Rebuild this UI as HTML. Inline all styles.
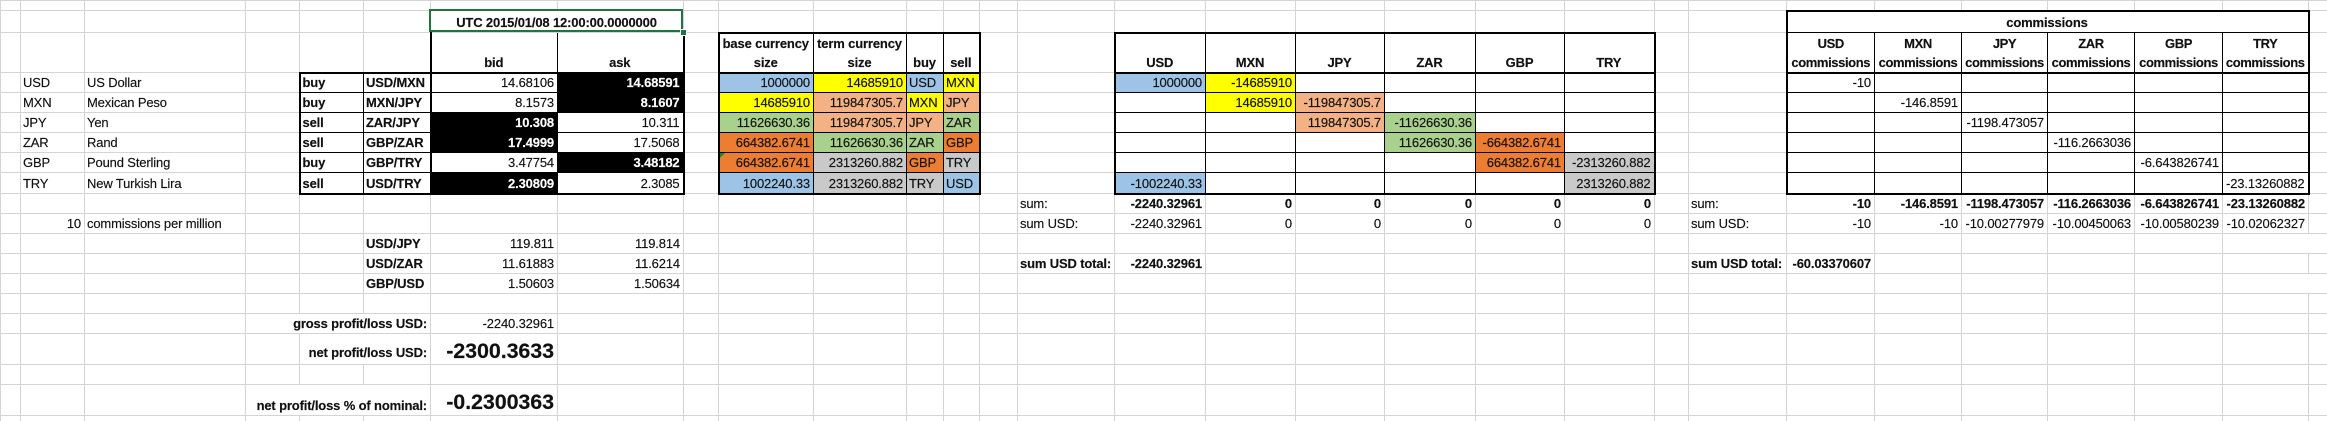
<!DOCTYPE html>
<html><head><meta charset="utf-8"><title>Triangular arbitrage sheet</title>
<style>
html,body{margin:0;padding:0;background:#fff;width:2327px;height:421px;overflow:hidden}
body{position:relative;font-family:"Liberation Sans",Arial,sans-serif;font-size:13px;color:#111;letter-spacing:-.15px;-webkit-text-stroke:.15px currentColor}
table{border-collapse:collapse;table-layout:fixed;width:2327px;position:absolute;left:0;top:0}
td{border:1px solid #d4d4d4;padding:0 3px 0 2px;vertical-align:bottom;white-space:nowrap;line-height:18px;overflow:visible;box-sizing:border-box}
.r{text-align:right}.c{text-align:center}.b{font-weight:bold}
.h{line-height:19px}.m{letter-spacing:-.4px;padding:0}
.k{border:1px solid #000}.L{border-left:2px solid #000}.R{border-right:2px solid #000}.T{border-top:2px solid #000}.B{border-bottom:2px solid #000}
.x{background:#000;color:#fff;font-weight:bold}
.bl{background:#9dc3e6}.ye{background:#ff0}.pe{background:#f4b183}.gr{background:#a9d18e}.or{background:#ed7d31}.gy{background:#c9c9c9}
.big{font-size:21.5px;font-weight:bold;letter-spacing:-.1px;line-height:26px;padding-bottom:0}
.n{padding-bottom:2px}
.sel{position:absolute;left:429px;top:9px;width:250px;height:19px;border:2px solid #217346;box-sizing:content-box}
.han{position:absolute;left:680px;top:29px;width:5px;height:5px;background:#217346;border:1px solid #fff}
.tri{position:absolute;left:720px;top:153px;width:0;height:0;border-top:5px solid #1e8a1e;border-right:5px solid transparent}
</style></head><body>
<table>
<colgroup><col style="width:20px"><col style="width:64px"><col style="width:161px"><col style="width:54px"><col style="width:64px"><col style="width:67px"><col style="width:127px"><col style="width:126px"><col style="width:35px"><col style="width:95px"><col style="width:93px"><col style="width:37px"><col style="width:36px"><col style="width:38px"><col style="width:97px"><col style="width:91px"><col style="width:90px"><col style="width:89px"><col style="width:91px"><col style="width:89px"><col style="width:90px"><col style="width:34px"><col style="width:98px"><col style="width:88px"><col style="width:87px"><col style="width:86px"><col style="width:87px"><col style="width:88px"><col style="width:86px"><col style="width:19px"></colgroup>
<tr style="height:10px"><td><td><td><td><td> <td><td><td><td><td> <td><td><td><td><td> <td><td><td><td><td> <td><td><td><td><td> <td><td><td><td><td></tr>
<tr style="height:22px"><td><td><td><td><td> <td>
<td colspan="2" class="c b">UTC 2015/01/08 12:00:00.0000000</td>
<td><td> <td><td><td><td><td> <td><td><td><td><td> <td><td><td>
<td colspan="6" class="k L R T c b">commissions</td><td></tr>
<tr style="height:40px"><td><td><td><td><td> <td>
<td class="k L B c b">bid</td><td class="k R B c b">ask</td><td>
<td class="k L T B c b h">base currency<br>size</td><td class="k T B c b h">term currency<br>size</td><td class="k T B c b">buy</td><td class="k R T B c b">sell</td><td><td>
<td class="k L T B c b">USD</td><td class="k T B c b">MXN</td><td class="k T B c b">JPY</td><td class="k T B c b">ZAR</td><td class="k T B c b">GBP</td><td class="k R T B c b">TRY</td><td><td>
<td class="k L B c b h m">USD<br>commissions</td><td class="k B c b h m">MXN<br>commissions</td><td class="k B c b h m">JPY<br>commissions</td><td class="k B c b h m">ZAR<br>commissions</td><td class="k B c b h m">GBP<br>commissions</td><td class="k R B c b h m">TRY<br>commissions</td><td></tr>
<tr style="height:20px"><td><td>USD</td><td>US Dollar</td><td>
<td class="k L T b">buy</td><td class="k T R b">USD/MXN</td><td class="k r">14.68106</td><td class="k R r x">14.68591</td><td>
<td class="k L r bl">1000000</td><td class="k r ye">14685910</td><td class="k bl">USD</td><td class="k R ye">MXN</td><td><td>
<td class="k L r bl">1000000</td><td class="k r ye">-14685910</td><td class="k"></td><td class="k"></td><td class="k"></td><td class="k R"></td><td><td>
<td class="k L r">-10</td><td class="k"></td><td class="k"></td><td class="k"></td><td class="k"></td><td class="k R"></td><td></tr>
<tr style="height:20px"><td><td>MXN</td><td>Mexican Peso</td><td>
<td class="k L b">buy</td><td class="k R b">MXN/JPY</td><td class="k r">8.1573</td><td class="k R r x">8.1607</td><td>
<td class="k L r ye">14685910</td><td class="k r pe">119847305.7</td><td class="k ye">MXN</td><td class="k R pe">JPY</td><td><td>
<td class="k L"></td><td class="k r ye">14685910</td><td class="k r pe">-119847305.7</td><td class="k"></td><td class="k"></td><td class="k R"></td><td><td>
<td class="k L"></td><td class="k r">-146.8591</td><td class="k"></td><td class="k"></td><td class="k"></td><td class="k R"></td><td></tr>
<tr style="height:20px"><td><td>JPY</td><td>Yen</td><td>
<td class="k L b">sell</td><td class="k R b">ZAR/JPY</td><td class="k r x">10.308</td><td class="k R r">10.311</td><td>
<td class="k L r gr">11626630.36</td><td class="k r pe">119847305.7</td><td class="k pe">JPY</td><td class="k R gr">ZAR</td><td><td>
<td class="k L"></td><td class="k"></td><td class="k r pe">119847305.7</td><td class="k r gr">-11626630.36</td><td class="k"></td><td class="k R"></td><td><td>
<td class="k L"></td><td class="k"></td><td class="k r">-1198.473057</td><td class="k"></td><td class="k"></td><td class="k R"></td><td></tr>
<tr style="height:20px"><td><td>ZAR</td><td>Rand</td><td>
<td class="k L b">sell</td><td class="k R b">GBP/ZAR</td><td class="k r x">17.4999</td><td class="k R r">17.5068</td><td>
<td class="k L r or">664382.6741</td><td class="k r gr">11626630.36</td><td class="k gr">ZAR</td><td class="k R or">GBP</td><td><td>
<td class="k L"></td><td class="k"></td><td class="k"></td><td class="k r gr">11626630.36</td><td class="k r or">-664382.6741</td><td class="k R"></td><td><td>
<td class="k L"></td><td class="k"></td><td class="k"></td><td class="k r">-116.2663036</td><td class="k"></td><td class="k R"></td><td></tr>
<tr style="height:20px"><td><td>GBP</td><td>Pound Sterling</td><td>
<td class="k L b">buy</td><td class="k R b">GBP/TRY</td><td class="k r">3.47754</td><td class="k R r x">3.48182</td><td>
<td class="k L r or">664382.6741</td><td class="k r gy">2313260.882</td><td class="k or">GBP</td><td class="k R gy">TRY</td><td><td>
<td class="k L"></td><td class="k"></td><td class="k"></td><td class="k"></td><td class="k r or">664382.6741</td><td class="k R r gy">-2313260.882</td><td><td>
<td class="k L"></td><td class="k"></td><td class="k"></td><td class="k"></td><td class="k r">-6.643826741</td><td class="k R"></td><td></tr>
<tr style="height:21px"><td><td>TRY</td><td>New Turkish Lira</td><td>
<td class="k L B b">sell</td><td class="k R B b">USD/TRY</td><td class="k B r x">2.30809</td><td class="k R B r">2.3085</td><td>
<td class="k L B r bl">1002240.33</td><td class="k B r gy">2313260.882</td><td class="k B gy">TRY</td><td class="k R B bl">USD</td><td><td>
<td class="k L B r bl">-1002240.33</td><td class="k B"></td><td class="k B"></td><td class="k B"></td><td class="k B"></td><td class="k R B r gy">2313260.882</td><td><td>
<td class="k L B"></td><td class="k B"></td><td class="k B"></td><td class="k B"></td><td class="k B"></td><td class="k R B r">-23.13260882</td><td></tr>
<tr style="height:20px"><td><td><td><td><td> <td><td><td><td><td> <td><td><td><td>
<td>sum:</td><td class="r b">-2240.32961</td><td class="r b">0</td><td class="r b">0</td><td class="r b">0</td><td class="r b">0</td><td class="r b">0</td><td>
<td>sum:</td><td class="r b">-10</td><td class="r b">-146.8591</td><td class="r b">-1198.473057</td><td class="r b">-116.2663036</td><td class="r b">-6.643826741</td><td class="r b">-23.13260882</td><td></tr>
<tr style="height:20px"><td><td class="r">10</td><td>commissions per million</td>
<td><td> <td><td><td><td><td> <td><td><td><td>
<td>sum USD:</td><td class="r">-2240.32961</td><td class="r">0</td><td class="r">0</td><td class="r">0</td><td class="r">0</td><td class="r">0</td><td>
<td>sum USD:</td><td class="r">-10</td><td class="r">-10</td><td class="r">-10.00277979</td><td class="r">-10.00450063</td><td class="r">-10.00580239</td><td class="r">-10.02062327</td><td></tr>
<tr style="height:20px"><td><td><td><td><td> <td class="b">USD/JPY</td><td class="r">119.811</td><td class="r">119.814</td><td><td> <td><td><td><td><td> <td><td><td><td><td> <td><td><td><td><td> <td><td><td></tr>
<tr style="height:20px"><td><td><td><td><td> <td class="b">USD/ZAR</td><td class="r">11.61883</td><td class="r">11.6214</td><td><td> <td><td><td><td>
<td class="b">sum USD total:</td><td class="r b">-2240.32961</td><td><td><td><td><td><td>
<td class="b">sum USD total:</td><td class="r b">-60.03370607</td><td><td><td><td><td><td></tr>
<tr style="height:20px"><td><td><td><td><td> <td class="b">GBP/USD</td><td class="r">1.50603</td><td class="r">1.50634</td><td><td> <td><td><td><td><td> <td><td><td><td><td> <td><td><td><td><td> <td><td><td></tr>
<tr style="height:20px"><td><td><td><td><td> <td><td><td><td><td> <td><td><td><td><td> <td><td><td><td><td> <td><td><td><td><td> <td><td><td><td><td></tr>
<tr style="height:20px"><td><td><td><td colspan="3" class="r b">gross profit/loss USD:</td><td class="r">-2240.32961</td><td><td><td> <td><td><td><td><td> <td><td><td><td><td> <td><td><td><td><td> <td><td><td><td><td></tr>
<tr style="height:31px"><td><td><td><td><td colspan="2" class="r b n">net profit/loss USD:</td><td class="r big">-2300.3633</td><td><td><td> <td><td><td><td><td> <td><td><td><td><td> <td><td><td><td><td> <td><td><td><td><td></tr>
<tr style="height:20px"><td><td><td><td><td> <td><td><td><td><td> <td><td><td><td><td> <td><td><td><td><td> <td><td><td><td><td> <td><td><td><td><td></tr>
<tr style="height:31px"><td><td><td><td colspan="3" class="r b">net profit/loss % of nominal:</td><td class="r big">-0.2300363</td><td><td><td> <td><td><td><td><td> <td><td><td><td><td> <td><td><td><td><td> <td><td><td><td><td></tr>
<tr style="height:6px"><td><td><td><td><td> <td><td><td><td><td> <td><td><td><td><td> <td><td><td><td><td> <td><td><td><td><td> <td><td><td><td><td></tr>
</table>
<div class="sel"></div><div class="han"></div><div class="tri"></div>
</body></html>
